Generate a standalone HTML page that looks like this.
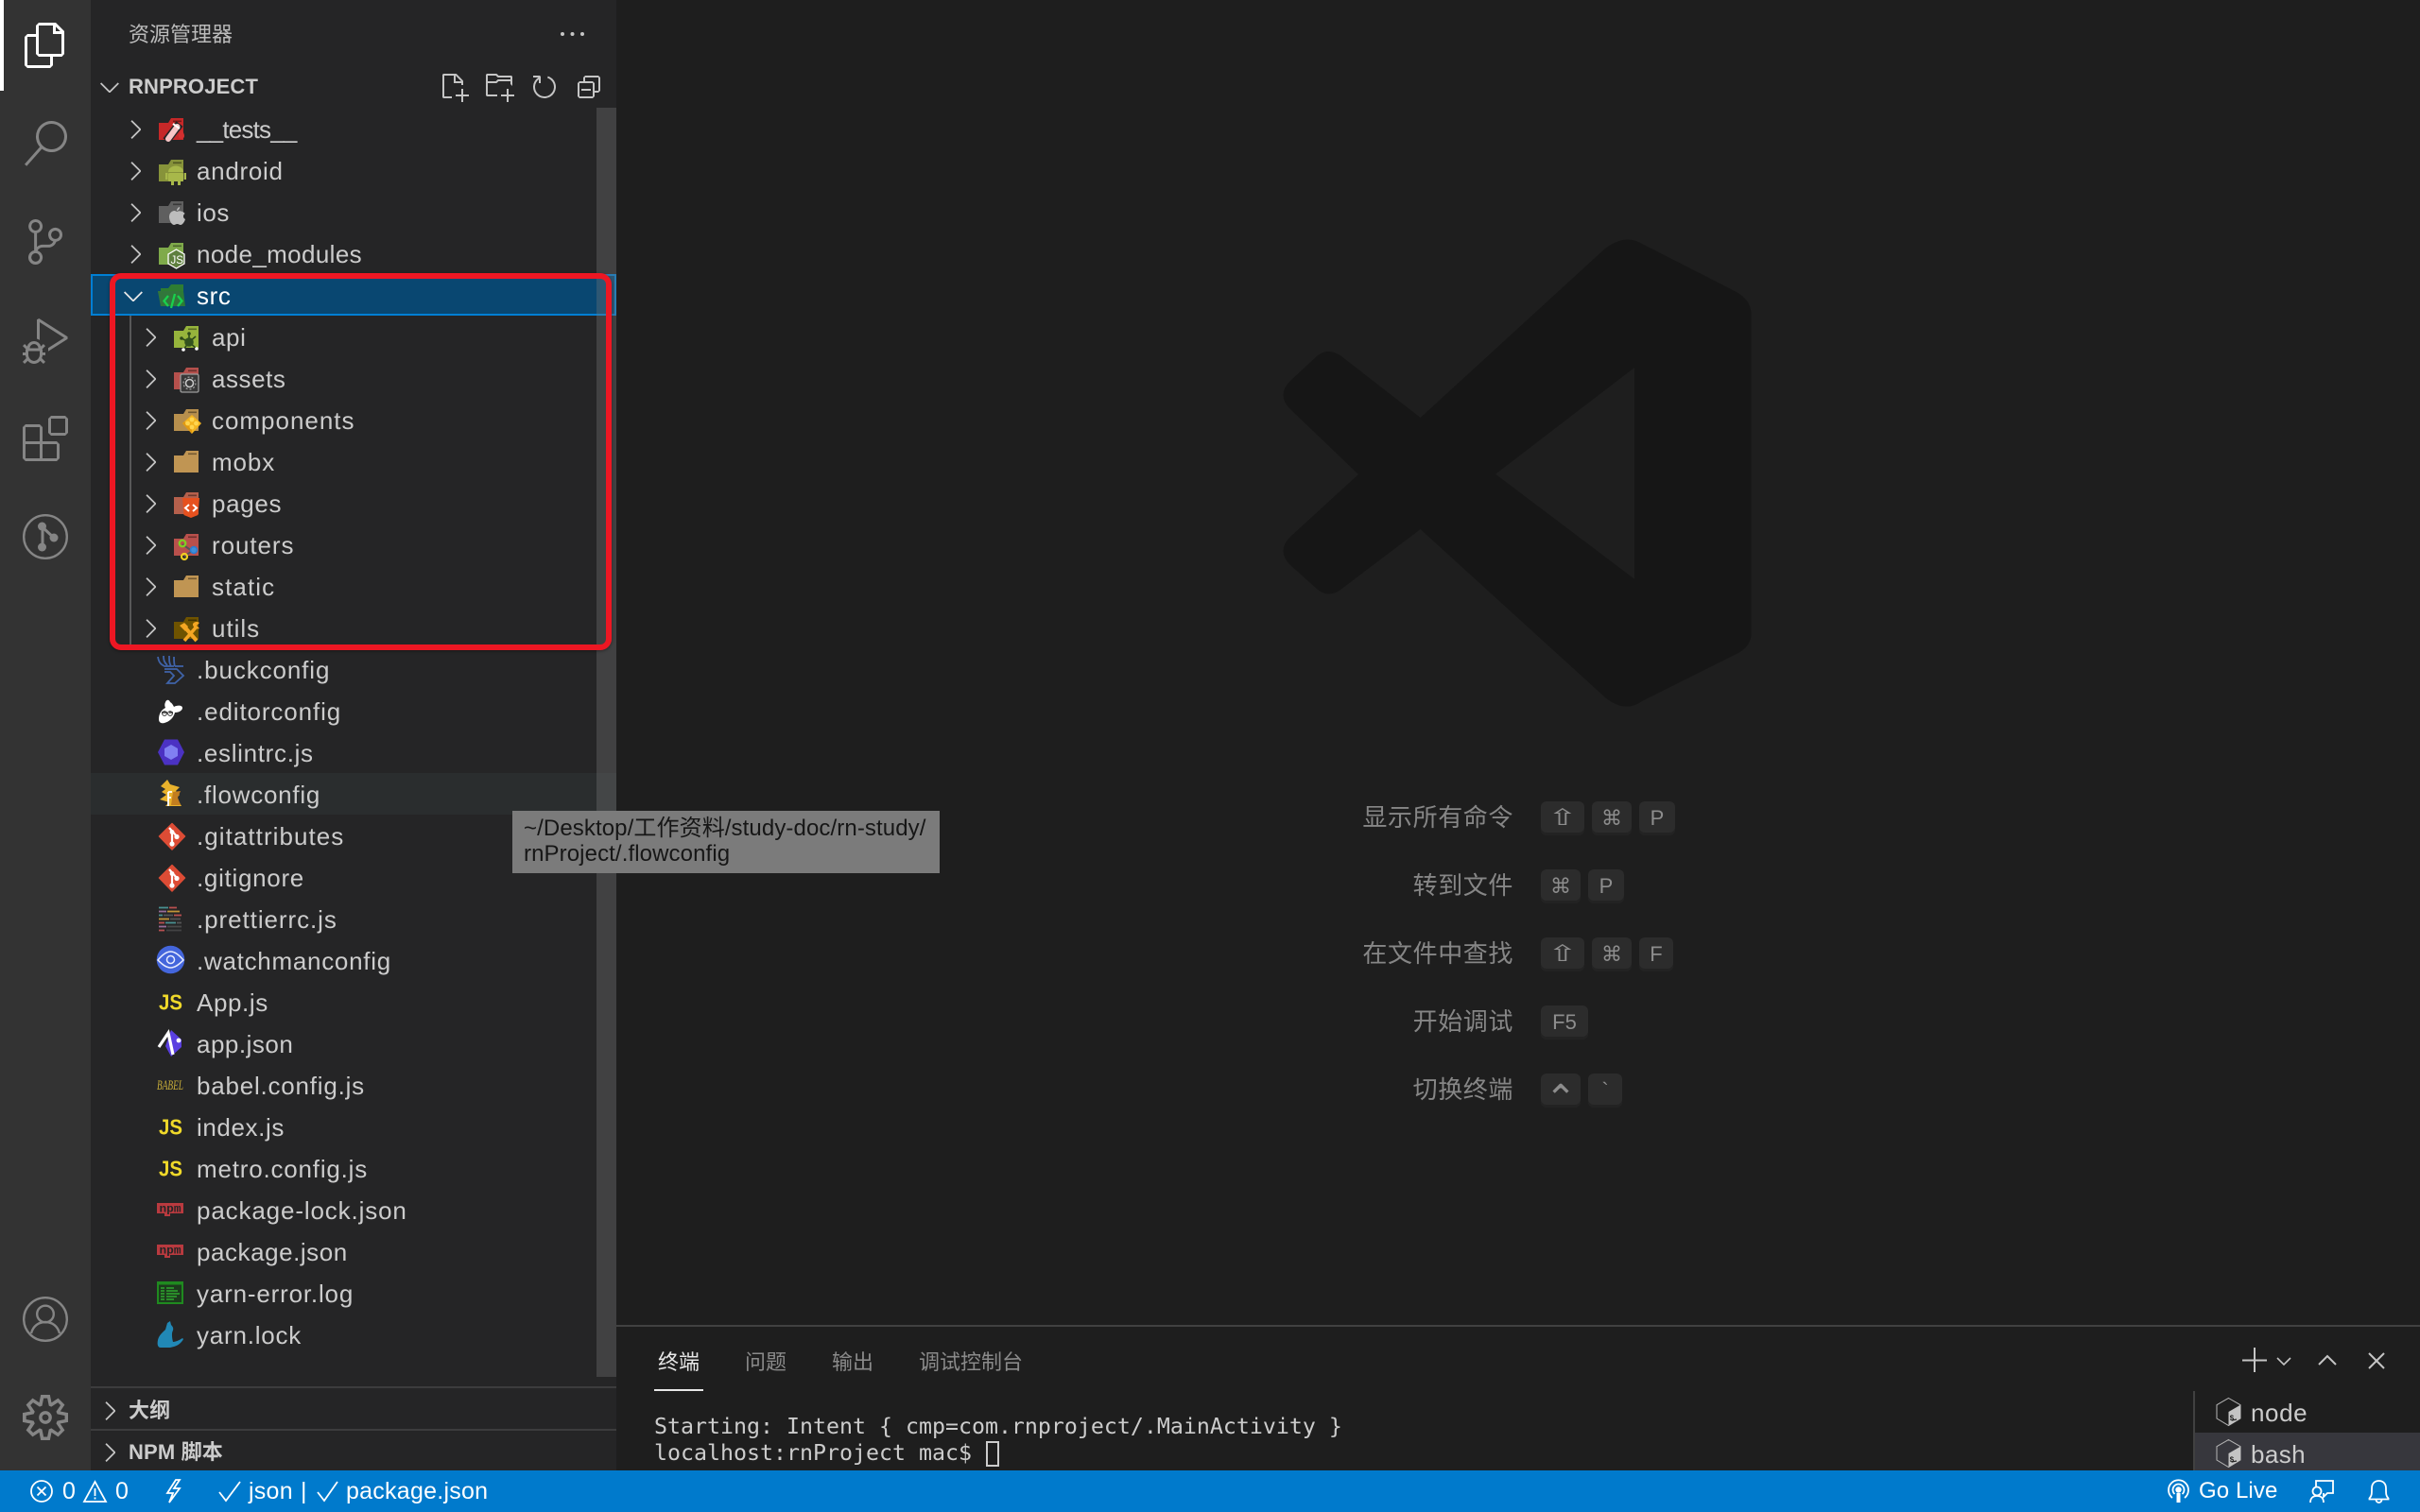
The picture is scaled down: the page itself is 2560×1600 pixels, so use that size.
<!DOCTYPE html>
<html><head><meta charset="utf-8"><style>
html,body{margin:0;padding:0;background:#1e1e1e}
#p{position:relative;width:2560px;height:1600px;overflow:hidden;background:#1e1e1e;font-family:"Liberation Sans","Noto Sans CJK SC",sans-serif;color:#ccc}
.a{position:absolute}
.t{position:absolute;white-space:nowrap}
#act{position:absolute;left:0;top:0;width:96px;height:1556px;background:#333}
#side{position:absolute;left:96px;top:0;width:556px;height:1556px;background:#252526}
.ai{position:absolute;left:24px;width:48px;height:48px;fill:#858585}
.r{position:absolute;left:96px;width:556px;height:44px;line-height:46px;font-size:26px}
.r span{position:absolute;left:112px;top:0;white-space:nowrap;letter-spacing:.82px}
.r .c{position:absolute;left:31px;top:7px;width:32px;height:32px;fill:#c5c5c5}
.r .ic{position:absolute;left:70px;top:6px;width:32px;height:32px;overflow:visible}
.l2 span{left:128px}.l2 .c{left:47px}.l2 .ic{left:86px}
.sel{background:#094771;outline:2px solid #007fd4;outline-offset:-2px;color:#fff}
.hov{background:#2a2d2e}
.sh{position:absolute;left:136px;font-size:22px;font-weight:700;color:#ccc;line-height:30px;white-space:nowrap;letter-spacing:.15px}
.sep{position:absolute;left:96px;width:556px;height:2px;background:#3c3c3d}
.lb{position:absolute;right:959px;font-size:26px;letter-spacing:.6px;color:#868686;line-height:39px;white-space:nowrap}
.k{position:absolute;height:36px;line-height:36px;text-align:center;background:#2c2c2c;border-radius:6px;box-shadow:inset 0 -3px 0 #232323;color:#8d8d8d;font-size:22px;font-family:"Liberation Sans","DejaVu Sans",sans-serif;overflow:hidden}
.k b{font-weight:400;font-size:24px;line-height:36px;display:block;transform:scaleX(1.6)}
.tab{position:absolute;top:1425px;font-size:22px;line-height:33px;color:#8a8a8a;white-space:nowrap}
.tm{position:absolute;left:692px;font-family:"DejaVu Sans Mono",monospace;font-size:23.25px;line-height:28px;color:#ccc;white-space:pre}
.st{position:absolute;color:#fff;line-height:44px;top:1556px;white-space:nowrap;font-size:25px;letter-spacing:.25px}
</style></head><body><div id="p">

<svg width="0" height="0" style="position:absolute"><defs>
<symbol id="cr" viewBox="0 0 16 16"><path d="M10.072 8.024L5.715 3.667l.618-.62L11 7.716v.618L6.333 13l-.618-.619 4.357-4.357z"/></symbol>
<symbol id="cd" viewBox="0 0 16 16"><path d="M7.976 10.072l4.357-4.357.62.618L8.284 11h-.618L3 6.333l.619-.618 4.357 4.357z"/></symbol>
<symbol id="fd" viewBox="0 0 32 32"><path d="M2 10H12L15 5H28V28H2Z" fill="currentColor"/><path d="M17 7.5h9v1.6h-9z" fill="#000" opacity=".4"/></symbol>
<symbol id="git" viewBox="0 0 32 32"><path d="M16 3.5L29.5 17 16 31 2.5 17Z" fill="#dd4c35" stroke="#dd4c35" stroke-width="1.5" stroke-linejoin="round"/><path d="M13 8L21 17M16 12V25" stroke="#fff" stroke-width="2.2" fill="none"/><circle cx="16" cy="25" r="2.6" fill="#fff"/><circle cx="21" cy="17.5" r="2.6" fill="#fff"/><circle cx="16" cy="12.5" r="2.4" fill="#fff"/></symbol>
<symbol id="js" viewBox="0 0 32 32"><text x="2" y="24.4" font-family="Liberation Sans" font-size="23" font-weight="700" fill="#f0d92a" textLength="25" lengthAdjust="spacingAndGlyphs">JS</text></symbol>
<symbol id="npm" viewBox="0 0 32 32"><path d="M0 9h28v11H14v3H8v-3H0Z" fill="#b93a3f"/><text x="2.5" y="18.6" font-family="Liberation Mono" font-size="12" font-weight="700" fill="#252526" textLength="23" lengthAdjust="spacingAndGlyphs">npm</text></symbol>
<symbol id="bash" viewBox="0 0 28 32"><path d="M13.5 1.5L26 8.7V23L13.5 30.5 1 23V8.7Z" fill="none" stroke="#b5b5b5" stroke-width="1"/><path d="M26 8.7V23L13.5 30.5V16Z" fill="#c4c4c4"/><path d="M17 25l5-1" stroke="#252525" stroke-width="1.2"/><text x="14.5" y="25" font-family="Liberation Mono" font-size="8" font-weight="700" fill="#252525">$</text></symbol>
</defs></svg>

<div id="act">
<div class="a" style="left:0;top:0;width:4px;height:96px;background:#fff"></div>
<svg class="ai" style="top:24px;fill:#fff" viewBox="0 0 24 24"><path d="M17.5 0h-9L7 1.5V6H2.5L1 7.5v15.07L2.5 24h12.07L16 22.57V18h4.7l1.3-1.43V4.5L17.5 0zm0 2.12l2.38 2.38H17.5V2.12zm-3 20.38h-12v-15H7v9.07L8.5 18h6v4.5zm6-6h-12v-15H16V6h4.5v10.5z"/></svg>
<svg class="ai" style="top:128px" viewBox="0 0 24 24"><path d="M15.25 0a8.25 8.25 0 0 0-6.18 13.72L1 22.88l1.12 1 8.05-9.12A8.251 8.251 0 1 0 15.25.01V0zm0 15a6.75 6.75 0 1 1 0-13.5 6.75 6.75 0 0 1 0 13.5z"/></svg>
<svg class="ai" style="top:232px" viewBox="0 0 24 24"><path d="M21.007 8.222A3.738 3.738 0 0 0 15.045 5.2a3.737 3.737 0 0 0 1.156 6.583 2.988 2.988 0 0 1-2.668 1.67h-2.99a4.456 4.456 0 0 0-2.989 1.165V7.4a3.737 3.737 0 1 0-1.494 0v9.117a3.776 3.776 0 1 0 1.816.099 2.99 2.99 0 0 1 2.668-1.667h2.99a4.484 4.484 0 0 0 4.223-3.039 3.736 3.736 0 0 0 3.25-3.687zM4.565 3.738a2.242 2.242 0 1 1 4.484 0 2.242 2.242 0 0 1-4.484 0zm4.484 16.441a2.242 2.242 0 1 1-4.484 0 2.242 2.242 0 0 1 4.484 0zm8.221-9.715a2.242 2.242 0 1 1 0-4.485 2.242 2.242 0 0 1 0 4.485z"/></svg>
<svg class="ai" style="top:337px" viewBox="0 0 24 24"><path d="M10.94 13.5l-1.32 1.32a3.73 3.73 0 0 0-7.24 0L1.06 13.5 0 14.56l1.72 1.72-.22.22V18H0v1.5h1.5v.08c.077.489.214.966.41 1.42L0 22.94 1.06 24l1.65-1.65A4.308 4.308 0 0 0 6 24a4.31 4.31 0 0 0 3.29-1.65L10.94 24 12 22.94 10.09 21c.198-.464.336-.951.41-1.45v-.1H12V18h-1.5v-1.5l-.22-.22L12 14.56l-1.06-1.06zM6 13.5a2.25 2.25 0 0 1 2.25 2.25h-4.5A2.25 2.25 0 0 1 6 13.5zm3 6a3.33 3.33 0 0 1-3 3 3.33 3.33 0 0 1-3-3v-2.25h6v2.25zm14.76-9.9v1.26L13.5 17.37v-1.77l8.46-5.37L9 2v9.46a5.07 5.07 0 0 0-1.5-.72V.63L8.64 0l15.12 9.6z"/></svg>
<svg class="ai" style="top:440px" viewBox="0 0 24 24"><path d="M13.5 1.5L15 0h7.5L24 1.5V9l-1.5 1.5H15L13.5 9V1.5zm1.5 0V9h7.5V1.5H15zM0 15V6l1.5-1.5H9L10.5 6v7.5H18l1.5 1.5v7.5L18 24H1.5L0 22.5V15zm9-1.5V6H1.5v7.5H9zM9 15H1.5v7.5H9V15zm1.5 7.5H18V15h-7.5v7.5z"/></svg>
<svg class="ai" style="top:544px" viewBox="0 0 48 48"><circle cx="24" cy="24" r="22.8" fill="none" stroke="#858585" stroke-width="2.4"/><path d="M21 12V34M21 14L34 26" stroke="#858585" stroke-width="3" fill="none"/><circle cx="20.5" cy="13" r="4.5"/><circle cx="20.5" cy="35" r="4.5"/><circle cx="33" cy="25" r="4.5"/></svg>
<svg class="ai" style="top:1372px" viewBox="0 0 48 48"><g fill="none" stroke="#858585" stroke-width="2.4"><circle cx="24" cy="24" r="22.8"/><circle cx="24" cy="18.5" r="8.8"/><path d="M9 39c2-8 8-12 15-12s13 4 15 12"/></g></svg>
<svg class="ai" style="top:1476px" viewBox="0 0 24 24"><path d="M19.85 8.75l4.15.83v4.84l-4.15.83 2.35 3.52-3.43 3.43-3.52-2.35-.83 4.15H9.58l-.83-4.15-3.52 2.35-3.43-3.43 2.35-3.52L0 14.42V9.58l4.15-.83L1.8 5.23 5.23 1.8l3.52 2.35L9.58 0h4.84l.83 4.15 3.52-2.35 3.43 3.43-2.35 3.52zm-1.57 5.07l4-.81v-2l-4-.81-.54-1.3 2.29-3.43-1.43-1.43-3.43 2.29-1.3-.54-.81-4h-2l-.81 4-1.3.54-3.43-2.29-1.43 1.43L6.38 8.9l-.54 1.3-4 .81v2l4 .81.54 1.3-2.29 3.43 1.43 1.43 3.43-2.29 1.3.54.81 4h2l.81-4 1.3-.54 3.43 2.29 1.43-1.43-2.29-3.43.54-1.3zm-8.186-4.672A3.43 3.43 0 0 1 12 8.57 3.44 3.44 0 0 1 15.43 12a3.43 3.43 0 1 1-5.336-2.852zm.956 4.274c.281.188.612.288.95.288A1.7 1.7 0 0 0 13.71 12a1.71 1.71 0 1 0-2.66 1.422z"/></svg>
</div>

<div id="side"></div>
<div class="t" style="left:136px;top:20px;font-size:22px;line-height:33px;color:#bbb">资源管理器</div>
<svg class="a" style="left:590px;top:30px" width="32" height="12"><circle cx="5" cy="6" r="2" fill="#c5c5c5"/><circle cx="15.5" cy="6" r="2" fill="#c5c5c5"/><circle cx="26" cy="6" r="2" fill="#c5c5c5"/></svg>

<svg class="a" style="left:100px;top:76px;fill:#c5c5c5" width="32" height="32"><use href="#cd" width="32" height="32"/></svg>
<div class="sh" style="top:77px">RNPROJECT</div>
<svg class="a" style="left:464px;top:76px;fill:#c5c5c5" width="32" height="32" viewBox="0 0 16 16"><path d="M9.5 1.1l3.4 3.5.1.4v2h-1V6H8V2H3v11h4v1H2.5l-.5-.5v-12l.5-.5h6.7l.3.1zM9 2v3h2.9L9 2zm4 14h-1v-3H9v-1h3V9h1v3h3v1h-3v3z"/></svg>
<svg class="a" style="left:512px;top:76px;fill:#c5c5c5" width="32" height="32" viewBox="0 0 16 16"><path d="M14.5 2H7.71l-.85-.85L6.51 1h-5l-.5.5v11l.5.5H7v-1H1.99V6h4.49l.35-.15.86-.86H14v1.5l1 1V2.5l-.5-.5zm-.51 2h-6.5l-.35.15-.86.86H2v-3h4.29l.85.85.36.15H14l-.01.99zM13 16h-1v-3H9v-1h3V9h1v3h3v1h-3v3z"/></svg>
<svg class="a" style="left:560px;top:76px;fill:#c5c5c5" width="32" height="32" viewBox="0 0 16 16"><path d="M4.681 3H2V2h3.5l.5.5V6H5V4a5 5 0 1 0 4.53-.761l.302-.954A6 6 0 1 1 4.681 3z"/></svg>
<svg class="a" style="left:607px;top:76px;fill:#c5c5c5" width="32" height="32" viewBox="0 0 16 16"><path d="M9 9H4v1h5V9z"/><path d="M5 3l1-1h7l1 1v7l-1 1h-2v2l-1 1H3l-1-1V6l1-1h2V3zm1 2h4l1 1v4h2V3H6v2zm4 1H3v7h7V6z"/></svg>

<div class="r" style="top:114px"><svg class="c"><use href="#cr" width="32" height="32"/></svg>
<svg class="ic" style="color:#c62828"><use href="#fd" width="32" height="32"/><path d="M24 11L10 29" stroke="#252526" stroke-width="9"/><path d="M21.5 14L12 27" stroke="#f7c5c5" stroke-width="6" stroke-linecap="round"/><path d="M17 11l7 5" stroke="#fff" stroke-width="2"/><path d="M26 17c2 3 3 5 3 7a3 3 0 0 1-6 0c0-2 1-4 3-7z" fill="#d32f2f"/></svg><span style="letter-spacing:-.8px">__tests__</span></div>

<div class="r" style="top:158px"><svg class="c"><use href="#cr" width="32" height="32"/></svg>
<svg class="ic" style="color:#87933a"><use href="#fd" width="32" height="32"/><path d="M12 18a8 6.5 0 0 1 16 0Z" fill="#a8b84a"/><rect x="12" y="19" width="16" height="9" rx="1.5" fill="#a8b84a"/><rect x="15" y="27" width="3" height="5" fill="#a8b84a"/><rect x="22" y="27" width="3" height="5" fill="#a8b84a"/><rect x="9" y="19" width="2.4" height="7" fill="#a8b84a"/><rect x="28.6" y="19" width="2.4" height="7" fill="#a8b84a"/></svg><span style="letter-spacing:.7px">android</span></div>

<div class="r" style="top:202px"><svg class="c"><use href="#cr" width="32" height="32"/></svg>
<svg class="ic" style="color:#5f5f5f"><use href="#fd" width="32" height="32"/><path d="M21 16c2-1 4-1 6 0 1 .5 2 1.2 2.6 2-2 1.2-2.5 4.5.4 6-1 3-3 6-5 6-1.3 0-2-1-3.5-1s-2.3 1-3.5 1c-2.5 0-5-5-5-8.500 0-4 3-6.500 5.500-6.500 1 0 1.700.5 2.500 1z" fill="#bdbdbd"/><path d="M21 15c0-2 1.300-3.500 3-4 .2 2-1.300 3.700-3 4z" fill="#bdbdbd"/></svg><span style="letter-spacing:.6px">ios</span></div>

<div class="r" style="top:246px"><svg class="c"><use href="#cr" width="32" height="32"/></svg>
<svg class="ic" style="color:#7faa4a"><use href="#fd" width="32" height="32"/><path d="M20.500 12L29 17V27L20.500 32 12 27V17Z" fill="#5e7f3e" stroke="#fff" stroke-width="1.300"/><text x="14.500" y="27" font-family="Liberation Sans" font-size="11.500" fill="#fff">JS</text></svg><span style="letter-spacing:.37px">node_modules</span></div>

<div class="r sel" style="top:290px"><svg class="c" style="left:29px;fill:#e8e8e8"><use href="#cd" width="32" height="32"/></svg>
<svg class="ic"><path d="M4 9H12L15 5H28V12H4Z" fill="#2e7d32"/><path d="M1 12H28L30 28H4Z" fill="#2e7d32" opacity=".95"/><path d="M1 12H24L27 28H4Z" fill="#32763b"/><path d="M12 17L7.500 22.500L12 28M22 17L26.500 22.500L22 28M19 15L15 30" stroke="#19d04d" stroke-width="2.300" fill="none"/></svg><span style="letter-spacing:.6px">src</span></div>

<div class="r l2" style="top:334px"><svg class="c"><use href="#cr" width="32" height="32"/></svg>
<svg class="ic" style="color:#96b43c"><use href="#fd" width="32" height="32"/><g stroke="#2d4a1a" stroke-width="1.600"><path d="M18 22L10 18M18 22L18 13M18 22L25 16M18 22L12 30M18 22L26 29"/></g><circle cx="18" cy="22" r="4.800" fill="#33521e"/><circle cx="10" cy="18" r="1.800" fill="#2d4a1a"/><circle cx="18" cy="13" r="1.800" fill="#2d4a1a"/><circle cx="12" cy="30" r="1.800" fill="#fff"/><circle cx="26" cy="29" r="1.800" fill="#fff"/></svg><span style="letter-spacing:.6px">api</span></div>

<div class="r l2" style="top:378px"><svg class="c"><use href="#cr" width="32" height="32"/></svg>
<svg class="ic" style="color:#b5504c"><use href="#fd" width="32" height="32"/><rect x="9" y="12" width="19" height="19" rx="1.500" fill="#383838" stroke="#9c9c9c" stroke-width="1.300"/><circle cx="18.500" cy="21.500" r="4" fill="none" stroke="#c9c9c9" stroke-width="1.600"/><circle cx="18.500" cy="21.500" r="6.400" fill="none" stroke="#999" stroke-width="1.400" stroke-dasharray="2 2"/></svg><span style="letter-spacing:.54px">assets</span></div>

<div class="r l2" style="top:422px"><svg class="c"><use href="#cr" width="32" height="32"/></svg>
<svg class="ic" style="color:#b78f4d"><use href="#fd" width="32" height="32"/><path d="M21 11L31 20 21 31 11 20Z" fill="#f4b41f"/><path d="M11 20L21 31V26L13 18Z" fill="#e29a11"/><circle cx="21" cy="16" r="2.400" fill="#ffd54f"/><circle cx="16.500" cy="20" r="2.400" fill="#ffd54f"/><circle cx="25.500" cy="20" r="2.400" fill="#ffd54f"/><circle cx="21" cy="24" r="2.400" fill="#ffd54f"/></svg><span style="letter-spacing:.98px">components</span></div>

<div class="r l2" style="top:466px"><svg class="c"><use href="#cr" width="32" height="32"/></svg>
<svg class="ic" style="color:#c09553"><use href="#fd" width="32" height="32"/></svg><span style="letter-spacing:.9px">mobx</span></div>

<div class="r l2" style="top:510px"><svg class="c"><use href="#cr" width="32" height="32"/></svg>
<svg class="ic" style="color:#b5604c"><use href="#fd" width="32" height="32"/><path d="M11 11H29L27.500 29 20 32 12.500 29Z" fill="#e6511f"/><path d="M18 18L14 21.500 18 25M22 18L26 21.500 22 25" stroke="#fff" stroke-width="2" fill="none"/></svg><span style="letter-spacing:.65px">pages</span></div>

<div class="r l2" style="top:554px"><svg class="c"><use href="#cr" width="32" height="32"/></svg>
<svg class="ic" style="color:#b9504c"><use href="#fd" width="32" height="32"/><path d="M11 16L21 23 13 29" stroke="#555" stroke-width="2" fill="none"/><circle cx="11" cy="15" r="3.300" fill="none" stroke="#7fd023" stroke-width="2.200"/><circle cx="23" cy="22" r="3.500" fill="#3f8fd8" stroke="#2b7bd0" stroke-width="1.500"/><circle cx="13" cy="29" r="3" fill="none" stroke="#f0d020" stroke-width="2.200"/></svg><span style="letter-spacing:.93px">routers</span></div>

<div class="r l2" style="top:598px"><svg class="c"><use href="#cr" width="32" height="32"/></svg>
<svg class="ic" style="color:#c09553"><use href="#fd" width="32" height="32"/></svg><span style="letter-spacing:1.09px">static</span></div>

<div class="r l2" style="top:642px"><svg class="c"><use href="#cr" width="32" height="32"/></svg>
<svg class="ic" style="color:#6f5300"><use href="#fd" width="32" height="32"/><path d="M12 14L26 30" stroke="#f5a623" stroke-width="4"/><path d="M8 14l5-3 4 4-3 5z" fill="#f5a623"/><path d="M26 15L13 30" stroke="#f5a623" stroke-width="3.600"/><path d="M22 12a5 5 0 0 1 7-1l-3 3 3 3a5 5 0 0 1-7-5z" fill="#f5a623"/></svg><span style="letter-spacing:.98px">utils</span></div>

<div class="r" style="top:686px"><svg class="ic"><g fill="none" stroke="#3f63a8" stroke-width="1.800"><path d="M1 3C2 9 4 11 8 13L18 13M7 2C7 7 8 9 11 12M13 2C13 7 13 10 15 13M18 3C18 8 18 11 19 13"/><path d="M8 16H21L28 23 19 31H11L18 23 14 19H8M19 13L28 13"/></g></svg><span style="letter-spacing:.89px">.buckconfig</span></div>

<div class="r" style="top:730px"><svg class="ic"><path d="M9 7c1-3 4-3 5 0 2 1 3 3 4 5 3-2 9-2 9 1 0 3-4 5-8 5-1 4-4 9-11 11-4 1-6-1-6-4 0-6 3-10 7-12-1-2-1-4 0-6z" fill="#fff"/><path d="M5 18h6M13 18h4" stroke="#333" stroke-width="1.600"/><circle cx="8" cy="19" r="2.400" fill="none" stroke="#333" stroke-width="1"/><circle cx="14" cy="19" r="2.400" fill="none" stroke="#333" stroke-width="1"/></svg><span style="letter-spacing:.88px">.editorconfig</span></div>

<div class="r" style="top:774px"><svg class="ic"><path d="M8 2.500H22L29 16 22 29.500H8L1 16Z" fill="#4b32c3"/><path d="M15 8L22 12V20L15 24 8 20V12Z" fill="#8080f2"/></svg><span style="letter-spacing:.68px">.eslintrc.js</span></div>

<div class="r hov" style="top:818px"><svg class="ic"><path d="M4 8L11 1 14 6 24 9 20 13 24 17 21 20 26 29 9 29 13 25 3 22 10 17 5 14 9 11Z" fill="#e9b22c"/><path d="M17 14L25 13 22 20 25 28H15Z" fill="#c27d1f"/><path d="M12 14V29M12 14h4M12 20h3" stroke="#fff" stroke-width="1.800" fill="none"/></svg><span style="letter-spacing:.75px">.flowconfig</span></div>

<div class="r" style="top:862px"><svg class="ic"><use href="#git" width="32" height="32"/></svg><span style="letter-spacing:1.05px">.gitattributes</span></div>
<div class="r" style="top:906px"><svg class="ic"><use href="#git" width="32" height="32"/></svg><span style="letter-spacing:.7px">.gitignore</span></div>

<div class="r" style="top:950px"><svg class="ic" style="opacity:.75"><g stroke-width="1.800"><path d="M2 4.500H12" stroke="#56b3b4"/><path d="M13 4.500H21" stroke="#ea5e5e"/><path d="M2 8.500H10" stroke="#bf85bf"/><path d="M11 8.500H24" stroke="#f7ba3e"/><path d="M2 12.500H6" stroke="#56b3b4"/><path d="M7 12.500H17" stroke="#666"/><path d="M18 12.500H26" stroke="#ea5e5e"/><path d="M2 16.500H13" stroke="#f7ba3e"/><path d="M14 16.500H25" stroke="#666"/><path d="M2 20.500H8" stroke="#ea5e5e"/><path d="M9 20.500H20" stroke="#56b3b4"/><path d="M21 20.500H26" stroke="#666"/><path d="M2 24.500H10" stroke="#bf85bf"/><path d="M11 24.500H26" stroke="#555"/><path d="M2 28.500H8" stroke="#ea5e5e"/><path d="M10 28.500H26" stroke="#4d4d4d"/></g></svg><span style="letter-spacing:.93px">.prettierrc.js</span></div>

<div class="r" style="top:994px"><svg class="ic"><circle cx="14.500" cy="15.500" r="14.800" fill="#4466dc"/><path d="M1 16C6 10 10 7 14.500 7S23 10 28 16C23 21 19 24 14.500 24S6 21 1 16Z" fill="none" stroke="#e8ecff" stroke-width="1.500"/><circle cx="14.500" cy="15.500" r="4" fill="none" stroke="#e8ecff" stroke-width="1.500"/></svg><span style="letter-spacing:.72px">.watchmanconfig</span></div>

<div class="r" style="top:1038px"><svg class="ic"><use href="#js" width="32" height="32"/></svg><span style="letter-spacing:.6px">App.js</span></div>

<div class="r" style="top:1082px"><svg class="ic"><path d="M15 2L26 12V20L15 30 9 19Z" fill="#5a3fe0"/><path d="M2 20L12 5 17 28" fill="none" stroke="#fff" stroke-width="3.200"/><circle cx="23" cy="13" r="2.400" fill="#fff"/></svg><span style="letter-spacing:.5px">app.json</span></div>

<div class="r" style="top:1126px"><svg class="ic" style="overflow:visible"><text x="0" y="21" font-family="Liberation Serif" font-style="italic" font-size="15" fill="#c9ae3a" textLength="28" lengthAdjust="spacingAndGlyphs">BABEL</text></svg><span style="letter-spacing:.78px">babel.config.js</span></div>

<div class="r" style="top:1170px"><svg class="ic"><use href="#js" width="32" height="32"/></svg><span style="letter-spacing:.6px">index.js</span></div>
<div class="r" style="top:1214px"><svg class="ic"><use href="#js" width="32" height="32"/></svg><span style="letter-spacing:.8px">metro.config.js</span></div>
<div class="r" style="top:1258px"><svg class="ic"><use href="#npm" width="32" height="32"/></svg><span style="letter-spacing:.86px">package-lock.json</span></div>
<div class="r" style="top:1302px"><svg class="ic"><use href="#npm" width="32" height="32"/></svg><span style="letter-spacing:.54px">package.json</span></div>

<div class="r" style="top:1346px"><svg class="ic"><rect x="1" y="5" width="26" height="22" fill="#1d3a1d" stroke="#1f8a1f" stroke-width="2"/><rect x="0" y="4" width="28" height="3.500" fill="#1f8a1f"/><path d="M4 11h4M10 11h8M4 14h4M10 14h12M4 17h4M10 17h14M4 20h4M10 20h11M4 23h4M10 23h8" stroke="#2ea82e" stroke-width="1.500"/></svg><span>yarn-error.log</span></div>

<div class="r" style="top:1390px"><svg class="ic"><path d="M11 4L14 2 15 6C17 8 18 10 16.500 13 15.500 15 16 20 17 24 20 24 24 22 27 20L28 21C26 25 22 28 18 29L14 30H4C1 30 0 27 1 22 2 17 6 14 9 11Z" fill="#2188b6"/></svg><span style="letter-spacing:.78px">yarn.lock</span></div>

<div class="a" style="left:137px;top:334px;width:2px;height:350px;background:#585858"></div>
<div class="a" style="left:631px;top:114px;width:21px;height:1343px;background:rgba(121,121,121,.34)"></div>

<div class="sep" style="top:1467px"></div>
<svg class="a" style="left:100px;top:1477px;fill:#c5c5c5" width="32" height="32"><use href="#cr" width="32" height="32"/></svg>
<div class="sh" style="top:1478px">大纲</div>
<div class="sep" style="top:1512px"></div>
<svg class="a" style="left:100px;top:1521px;fill:#c5c5c5" width="32" height="32"><use href="#cr" width="32" height="32"/></svg>
<div class="sh" style="top:1522px">NPM 脚本</div>

<!-- logo -->
<svg class="a" style="left:0;top:0" width="2560" height="1600"><path fill="#161616" d="M1698 263Q1719 247 1737 258L1835 308Q1852.600 317 1852.600 333V670Q1852.600 685 1835 693L1737 742Q1719 755 1698 738L1502.600 560L1419.400 623Q1405.400 634 1393 623L1365 598Q1350 583 1365 568L1437 502L1365 433Q1350 418 1365 403L1393 377Q1405 367 1419 377L1502.600 442ZM1729 389L1582 501.700L1729 612.700Z" fill-rule="evenodd"/></svg>

<!-- welcome -->
<div class="lb" style="top:846px">显示所有命令</div>
<div class="k" style="left:1630px;top:848px;width:46px"><b>⇧</b></div><div class="k" style="left:1684px;top:848px;width:42px">⌘</div><div class="k" style="left:1734px;top:848px;width:38px">P</div>
<div class="lb" style="top:918px">转到文件</div>
<div class="k" style="left:1630px;top:920px;width:42px">⌘</div><div class="k" style="left:1680px;top:920px;width:38px">P</div>
<div class="lb" style="top:990px">在文件中查找</div>
<div class="k" style="left:1630px;top:992px;width:46px"><b>⇧</b></div><div class="k" style="left:1684px;top:992px;width:42px">⌘</div><div class="k" style="left:1734px;top:992px;width:36px">F</div>
<div class="lb" style="top:1062px">开始调试</div>
<div class="k" style="left:1630px;top:1064px;width:50px">F5</div>
<div class="lb" style="top:1134px">切换终端</div>
<div class="k" style="left:1630px;top:1136px;width:42px"><b style="font-size:40px;line-height:54px;transform:none">⌃</b></div><div class="k" style="left:1680px;top:1136px;width:36px">`</div>

<!-- panel -->
<div class="a" style="left:652px;top:1402px;width:1908px;height:2px;background:#414141"></div>
<div class="tab" style="left:696px;color:#e7e7e7">终端</div>
<div class="tab" style="left:788px">问题</div>
<div class="tab" style="left:880px">输出</div>
<div class="tab" style="left:972px">调试控制台</div>
<div class="a" style="left:692px;top:1470px;width:52px;height:2px;background:#e7e7e7"></div>
<div class="tm" style="top:1496px">Starting: Intent { cmp=com.rnproject/.MainActivity }</div>
<div class="tm" style="top:1524px">localhost:rnProject mac$ </div>
<div class="a" style="left:1043px;top:1525px;width:10px;height:23px;border:2px solid #ccc"></div>

<div class="a" style="left:2320px;top:1472px;width:2px;height:84px;background:#414141"></div>
<div class="a" style="left:2322px;top:1516px;width:238px;height:40px;background:#37373d"></div>
<svg class="a" style="left:2344px;top:1478px" width="28" height="32"><use href="#bash" width="28" height="32"/></svg>
<div class="t" style="left:2381px;top:1473px;font-size:26px;line-height:44px;letter-spacing:.6px">node</div>
<svg class="a" style="left:2344px;top:1522px" width="28" height="32"><use href="#bash" width="28" height="32"/></svg>
<div class="t" style="left:2381px;top:1517px;font-size:26px;line-height:44px;letter-spacing:.4px">bash</div>

<svg class="a" style="left:0;top:0" width="2560" height="1600" fill="none" stroke="#c5c5c5" stroke-width="2">
<path d="M2372 1439.500H2398M2385 1426V1452"/>
<path d="M2409 1437L2416 1444 2423 1437" stroke-width="1.600"/>
<path d="M2453 1444L2462 1435 2471 1444"/>
<path d="M2506 1432L2522 1448M2522 1432L2506 1448"/>
</svg>

<!-- tooltip -->
<div class="a" style="left:542px;top:858px;width:452px;height:66px;background:#7b7b7b"></div>
<div class="t" style="left:554px;top:863px;font-size:24px;line-height:27px;letter-spacing:.1px;color:#161616">~/Desktop/工作资料/study-doc/rn-study/<br>rnProject/.flowconfig</div>

<!-- red annotation -->
<div class="a" style="left:116px;top:289px;width:519px;height:387px;border:6px solid #ed1723;border-radius:12px;box-shadow:0 1px 3px rgba(0,0,0,.4)"></div>

<!-- status -->
<div class="a" style="left:0;top:1556px;width:2560px;height:44px;background:#007acc"></div>
<svg class="a" style="left:0;top:0" width="2560" height="1600" fill="none" stroke="#fff" stroke-width="1.800">
<circle cx="44" cy="1578" r="11"/><path d="M39.500 1573.500L48.500 1582.500M48.500 1573.500L39.500 1582.500"/>
<path d="M100.500 1568L112 1589H89Z"/><path d="M100.500 1575V1583M100.500 1584.500V1586.500"/>
<path d="M186 1566L177 1580H183L179 1590L190 1575H184L190 1566Z"/>
<path d="M232 1579L239 1588L254 1568M336 1579L343 1588L357 1568"/>
<path d="M2298 1585A10.500 10.500 0 1 1 2311 1585M2300.500 1581A6 6 0 1 1 2308.500 1581"/>
<circle cx="2304.500" cy="1576.500" r="2.300" fill="#fff"/><path d="M2304.500 1580V1590" stroke-width="4"/>
<path d="M2450 1574V1567H2468V1580H2462L2458 1584V1580"/><circle cx="2451" cy="1578" r="4.500"/><path d="M2444 1590C2444 1585 2447 1583 2451 1583S2458 1585 2458 1590"/>
<path d="M2506.500 1585.500C2509 1583 2509 1581 2509 1575C2509 1570 2512 1567 2516.500 1567S2524 1570 2524 1575C2524 1581 2524 1583 2526.500 1585.500V1586.500H2506.500Z"/><path d="M2513.500 1587A3 3 0 0 0 2519.500 1587"/>
</svg>
<div class="st" style="left:66px">0</div>
<div class="st" style="left:122px">0</div>
<div class="st" style="left:263px">json</div>
<div class="st" style="left:318px">|</div>
<div class="st" style="left:366px">package.json</div>
<div class="st" style="left:2326px;font-size:24px;letter-spacing:.1px">Go Live</div>

</div></body></html>
